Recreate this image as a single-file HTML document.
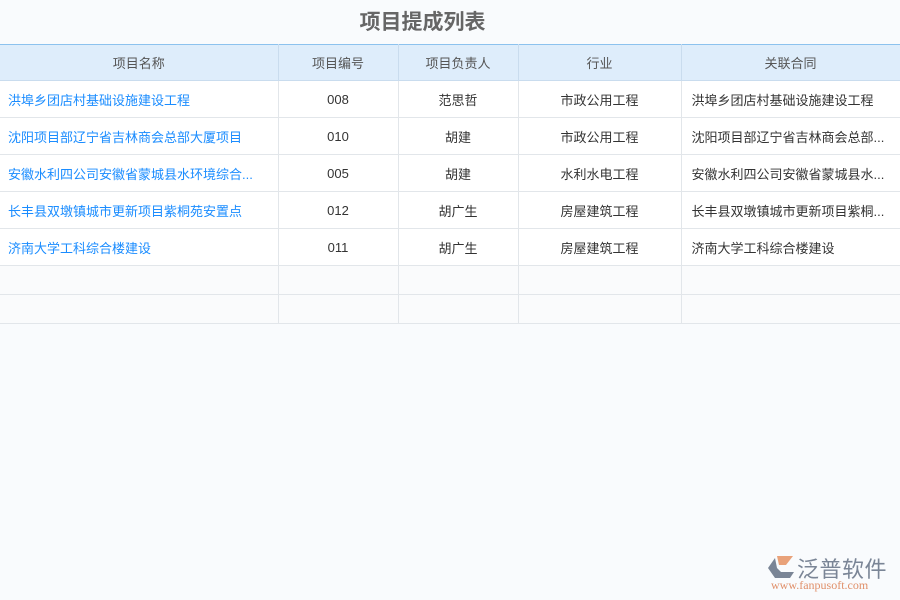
<!DOCTYPE html><html><head><meta charset="utf-8"><style>
body{margin:0;width:900px;height:600px;background:#f9fbfd;font-family:"Liberation Sans","Noto Sans CJK SC",sans-serif;position:relative;overflow:hidden}
h1{margin:0;position:absolute;top:6px;left:0;width:845px;text-align:center;font-size:21px;color:#666;font-weight:bold}
table{position:absolute;top:44px;left:0;border-collapse:collapse;width:900px;table-layout:fixed;font-size:13px}
th,td{padding:0}
th{background:#deedfb;color:#555;font-weight:normal;height:35px;border-top:1px solid #8cc2ee;border-right:1px solid #c9dcee;border-bottom:1px solid #c9dcee}
td{height:36px;border-right:1px solid #e2e6ea;border-bottom:1px solid #e2e6ea;color:#333;text-align:center;white-space:nowrap;overflow:hidden;text-overflow:ellipsis;background:#fff}
tr.e td{height:28px;background:#fafbfc}
td.l{text-align:left;padding-left:8px;color:#1a8cff}
td.r{text-align:left;padding-left:10px}
.logo{position:absolute;left:768px;top:553px}
</style></head><body>
<h1>项目提成列表</h1>
<table><colgroup><col style="width:278px"><col style="width:120px"><col style="width:120px"><col style="width:163px"><col style="width:219px"></colgroup>
<tr><th>项目名称</th><th>项目编号</th><th>项目负责人</th><th>行业</th><th>关联合同</th></tr>
<tr><td class="l">洪埠乡团店村基础设施建设工程</td><td>008</td><td>范思哲</td><td>市政公用工程</td><td class="r">洪埠乡团店村基础设施建设工程</td></tr>
<tr><td class="l">沈阳项目部辽宁省吉林商会总部大厦项目</td><td>010</td><td>胡建</td><td>市政公用工程</td><td class="r">沈阳项目部辽宁省吉林商会总部...</td></tr>
<tr><td class="l">安徽水利四公司安徽省蒙城县水环境综合...</td><td>005</td><td>胡建</td><td>水利水电工程</td><td class="r">安徽水利四公司安徽省蒙城县水...</td></tr>
<tr><td class="l">长丰县双墩镇城市更新项目紫桐苑安置点</td><td>012</td><td>胡广生</td><td>房屋建筑工程</td><td class="r">长丰县双墩镇城市更新项目紫桐...</td></tr>
<tr><td class="l">济南大学工科综合楼建设</td><td>011</td><td>胡广生</td><td>房屋建筑工程</td><td class="r">济南大学工科综合楼建设</td></tr>
<tr class="e"><td></td><td></td><td></td><td></td><td></td></tr>
<tr class="e"><td></td><td></td><td></td><td></td><td></td></tr>
</table>
<div class="logo">
<svg width="28" height="26" style="position:absolute;left:0;top:2px"><path d="M9 1h16l-7 9H11z" fill="#e9a27a"/><path d="M7 3L0 13l7 10h15l4-6H13l-4-4z" fill="#7a8596"/></svg>
<div style="position:absolute;left:29px;top:-1px;font-size:22px;color:#7a8596;white-space:nowrap;letter-spacing:0.5px">泛普软件</div>
<div style="position:absolute;left:3px;top:25px;font-size:12px;color:#e0906a;font-family:'Liberation Serif',serif;white-space:nowrap">www.fanpusoft.com</div>
</div>
</body></html>
